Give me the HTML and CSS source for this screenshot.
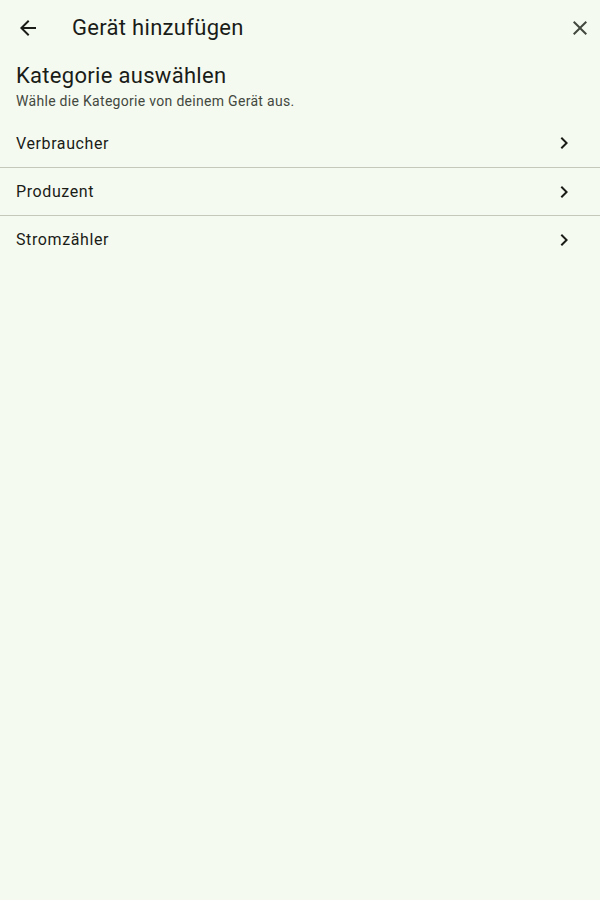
FILE: index.html
```html
<!DOCTYPE html>
<html lang="de">
<head>
<meta charset="utf-8">
<link rel="stylesheet" href="styles.css">
</head>
<body>
<div class="app">
  <header class="topbar">
    <button class="icon-btn" aria-label="Zurück">
      <svg width="24" height="24" viewBox="0 0 24 24"><path d="M20 11H7.830l5.59-5.59L12 4l-8 8 8 8 1.41-1.41L7.83 13H20v-2z" fill="currentColor"/></svg>
    </button>
    <h1 class="title">Gerät hinzufügen</h1>
    <button class="icon-btn close" aria-label="Schließen">
      <svg width="24" height="24" viewBox="0 0 24 24"><path d="M19 6.41 17.59 5 12 10.59 6.41 5 5 6.41 10.59 12 5 17.59 6.41 19 12 13.41 17.59 19 19 17.59 13.41 12z" fill="currentColor"/></svg>
    </button>
  </header>
  <section class="intro">
    <h2 class="heading">Kategorie auswählen</h2>
    <p class="sub">Wähle die Kategorie von deinem Gerät aus.</p>
  </section>
  <ul class="list">
    <li class="item"><span>Verbraucher</span><svg width="24" height="24" viewBox="0 0 24 24"><path d="M10 6 8.59 7.41 13.17 12l-4.58 4.590L10 18l6-6z" fill="currentColor"/></svg></li>
    <li class="item"><span>Produzent</span><svg width="24" height="24" viewBox="0 0 24 24"><path d="M10 6 8.59 7.41 13.17 12l-4.58 4.59L10 18l6-6z" fill="currentColor"/></svg></li>
    <li class="item"><span>Stromzähler</span><svg width="24" height="24" viewBox="0 0 24 24"><path d="M10 6 8.59 7.41 13.17 12l-4.58 4.59L10 18l6-6z" fill="currentColor"/></svg></li>
  </ul>
</div>
</body>
</html>
```

FILE: styles.css
```css
html, body {
  margin: 0;
  padding: 0;
  background: #f5faf0;
}
body {
  font-family: Roboto, "Noto Sans", sans-serif;
  color: #1a1c18;
}
.app {
  width: 600px;
  min-height: 900px;
}
.topbar {
  display: flex;
  align-items: center;
  height: 55px;
  padding: 0 0 0 4px;
  box-sizing: border-box;
}
.icon-btn {
  width: 48px;
  height: 48px;
  border: none;
  background: none;
  padding: 0;
  display: flex;
  align-items: center;
  justify-content: center;
  color: #1a1c18;
}
.icon-btn.close {
  width: 32px;
  justify-content: flex-start;
  color: #43483f;
}
.title {
  flex: 1;
  margin: 0 0 0 20px;
  font-size: 22px;
  font-weight: 400;
  line-height: 28px;
  letter-spacing: 0.3px;
}
.intro {
  padding: 7px 16px 8px;
}
.heading {
  margin: 0;
  font-size: 22px;
  font-weight: 400;
  line-height: 28px;
  letter-spacing: 0.3px;
}
.sub {
  margin: 1px 0 0;
  font-size: 14px;
  line-height: 20px;
  color: #43483f;
  letter-spacing: 0.3px;
}
.list {
  list-style: none;
  margin: 0;
  padding: 0;
}
.item {
  display: flex;
  align-items: center;
  justify-content: space-between;
  box-sizing: border-box;
  height: 48px;
  padding: 0 24px 0 16px;
  font-size: 16px;
  letter-spacing: 0.6px;
  color: #1a1c18;
}
.item + .item {
  border-top: 1px solid #c3c8bb;
}
.item svg {
  color: #1a1c18;
}
```
